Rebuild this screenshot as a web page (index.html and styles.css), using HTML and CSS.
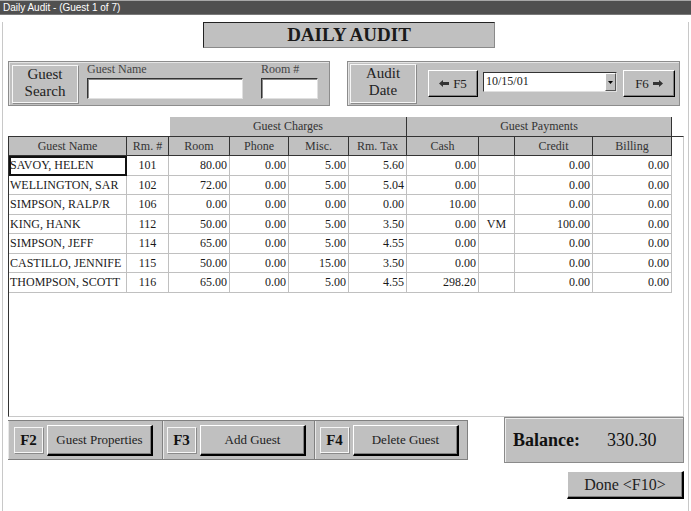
FILE: index.html
```html
<!DOCTYPE html>
<html lang="en">

<head>
    <meta charset="UTF-8">
    <title>Daily Audit</title>
    <link rel="stylesheet" href="styles.css">
</head>

<body>
    <div class="titlebar">Daily Audit - (Guest 1 of 7)</div>

    <div class="window">
        <div class="heading">DAILY AUDIT</div>

        <!-- Search / date panels -->
        <div class="search-row">
            <div class="panel guest-panel">
                <div class="caption-box">Guest<br>Search</div>
                <div class="field name-field">
                    <label>Guest Name</label>
                    <div class="input"></div>
                </div>
                <div class="field room-field">
                    <label>Room #</label>
                    <div class="input"></div>
                </div>
            </div>
            <div class="panel date-panel">
                <div class="caption-box">Audit<br>Date</div>
                <button class="btn nav-btn prev-btn">
                    <svg width="10" height="7" viewBox="0 0 10 7"><path d="M0 3.5 4 0v2h6v3H4v2z" fill="#333"/></svg>
                    F5
                </button>
                <div class="combo">
                    <span class="combo-text">10/15/01</span>
                    <span class="combo-arrow">
                        <svg width="5" height="3" viewBox="0 0 5 3"><path d="M0 0h5L2.5 3z" fill="#000"/></svg>
                    </span>
                </div>
                <button class="btn nav-btn next-btn">
                    F6
                    <svg width="10" height="7" viewBox="0 0 10 7"><path d="M10 3.5 6 0v2H0v3h6v2z" fill="#333"/></svg>
                </button>
            </div>
        </div>

        <!-- Grid -->
        <div class="group-headers">
            <div class="group charges">Guest Charges</div>
            <div class="group payments">Guest Payments</div>
        </div>
        <div class="grid-frame">
            <div class="audit-grid">
                <div class="head">Guest Name</div>
                <div class="head">Rm. #</div>
                <div class="head">Room</div>
                <div class="head">Phone</div>
                <div class="head">Misc.</div>
                <div class="head">Rm. Tax</div>
                <div class="head">Cash</div>
                <div class="head"></div>
                <div class="head">Credit</div>
                <div class="head">Billing</div>

                <div class="cell name focus">SAVOY, HELEN</div>
                <div class="cell rm">101</div>
                <div class="cell">80.00</div>
                <div class="cell">0.00</div>
                <div class="cell">5.00</div>
                <div class="cell">5.60</div>
                <div class="cell">0.00</div>
                <div class="cell card"></div>
                <div class="cell">0.00</div>
                <div class="cell">0.00</div>

                <div class="cell name">WELLINGTON, SAR</div>
                <div class="cell rm">102</div>
                <div class="cell">72.00</div>
                <div class="cell">0.00</div>
                <div class="cell">5.00</div>
                <div class="cell">5.04</div>
                <div class="cell">0.00</div>
                <div class="cell card"></div>
                <div class="cell">0.00</div>
                <div class="cell">0.00</div>

                <div class="cell name">SIMPSON, RALP/R</div>
                <div class="cell rm">106</div>
                <div class="cell">0.00</div>
                <div class="cell">0.00</div>
                <div class="cell">0.00</div>
                <div class="cell">0.00</div>
                <div class="cell">10.00</div>
                <div class="cell card"></div>
                <div class="cell">0.00</div>
                <div class="cell">0.00</div>

                <div class="cell name">KING, HANK</div>
                <div class="cell rm">112</div>
                <div class="cell">50.00</div>
                <div class="cell">0.00</div>
                <div class="cell">5.00</div>
                <div class="cell">3.50</div>
                <div class="cell">0.00</div>
                <div class="cell card">VM</div>
                <div class="cell">100.00</div>
                <div class="cell">0.00</div>

                <div class="cell name">SIMPSON, JEFF</div>
                <div class="cell rm">114</div>
                <div class="cell">65.00</div>
                <div class="cell">0.00</div>
                <div class="cell">5.00</div>
                <div class="cell">4.55</div>
                <div class="cell">0.00</div>
                <div class="cell card"></div>
                <div class="cell">0.00</div>
                <div class="cell">0.00</div>

                <div class="cell name">CASTILLO, JENNIFE</div>
                <div class="cell rm">115</div>
                <div class="cell">50.00</div>
                <div class="cell">0.00</div>
                <div class="cell">15.00</div>
                <div class="cell">3.50</div>
                <div class="cell">0.00</div>
                <div class="cell card"></div>
                <div class="cell">0.00</div>
                <div class="cell">0.00</div>

                <div class="cell name">THOMPSON, SCOTT</div>
                <div class="cell rm">116</div>
                <div class="cell">65.00</div>
                <div class="cell">0.00</div>
                <div class="cell">5.00</div>
                <div class="cell">4.55</div>
                <div class="cell">298.20</div>
                <div class="cell card"></div>
                <div class="cell">0.00</div>
                <div class="cell">0.00</div>
            </div>
        </div>

        <!-- Toolbar and balance -->
        <div class="bottom-row">
            <div class="toolbar">
                <div class="tool-group g1">
                    <span class="fkey">F2</span>
                    <button class="btn tool-btn">Guest Properties</button>
                </div>
                <div class="tool-group g2">
                    <span class="fkey">F3</span>
                    <button class="btn tool-btn">Add Guest</button>
                </div>
                <div class="tool-group g3">
                    <span class="fkey">F4</span>
                    <button class="btn tool-btn">Delete Guest</button>
                </div>
            </div>
            <div class="balance">
                <span class="balance-label">Balance:</span>
                <span class="balance-value">330.30</span>
            </div>
        </div>

        <div class="done-row">
            <button class="btn done-btn">Done &lt;F10&gt;</button>
        </div>
    </div>
</body>

</html>
```

FILE: styles.css
```css
* {
    box-sizing: border-box;
}

body {
    margin: 0;
    width: 691px;
    height: 511px;
    overflow: hidden;
    background: #fff;
    font-family: "Liberation Serif", "Times New Roman", serif;
    color: #222;
}

/* Title bar */
.titlebar {
    height: 15px;
    padding-left: 3px;
    background: #505050;
    border-top: 1px solid #a8a8a8;
    border-bottom: 1px solid #7a7a7a;
    color: #fff;
    font: 10px/13px "Liberation Sans", Arial, sans-serif;
}

/* Window body */
.window {
    margin-left: 2px;
    width: 687px;
    height: 494px;
    border-left: 1px solid #c8c8c8;
    border-right: 1px solid #c8c8c8;
    border-bottom: 2px solid #444;
}

.heading {
    margin: 7px 0 0 200px;
    width: 292px;
    height: 26px;
    background: #c0c0c0;
    border: 1px solid;
    border-color: #222 #8a8a8a #8a8a8a #222;
    text-align: center;
    font-size: 19px;
    font-weight: bold;
    line-height: 24px;
    color: #1a1a1a;
}

/* Search row */
.search-row {
    display: flex;
    margin-top: 13px;
    height: 45px;
}

.panel {
    display: flex;
    align-items: flex-start;
    height: 45px;
    background: #c0c0c0;
    border: 1px solid #8c8c8c;
    box-shadow: inset 1px 1px #e4e4e4;
}

.guest-panel {
    margin-left: 5px;
    width: 322px;
    padding-left: 3px;
}

.date-panel {
    margin-left: 17px;
    width: 333px;
    padding-left: 2px;
}

.caption-box {
    width: 66px;
    padding-top: 0;
    border: 1px solid #f6f6f6;
    box-shadow: 1px 1px #8a8a8a;
    text-align: center;
    font-size: 15px;
    line-height: 17px;
    color: #222;
}

.guest-panel .caption-box {
    height: 38px;
    margin-top: 3px;
}

.date-panel .caption-box {
    height: 39px;
    margin-top: 2px;
}

.field label {
    display: block;
    height: 16px;
    font-size: 12px;
    line-height: 14px;
    color: #444;
}

.name-field {
    margin-left: 9px;
    width: 156px;
}

.room-field {
    margin-left: 18px;
    width: 57px;
}

.input {
    height: 21px;
    background: #fff;
    border: 1px solid;
    border-color: #333 #e0e0e0 #e0e0e0 #333;
    box-shadow: inset 1px 1px #8a8a8a;
}

/* Buttons */
.btn {
    padding: 0;
    background: #c0c0c0;
    border: 1px solid;
    border-color: #fff #000 #000 #fff;
    box-shadow: inset -1px -1px #808080;
    font-family: inherit;
    color: #222;
    cursor: pointer;
}

.nav-btn {
    display: flex;
    align-items: center;
    justify-content: center;
    gap: 4px;
    margin-top: 8px;
    height: 27px;
    font-size: 13px;
}

.prev-btn {
    margin-left: 12px;
    width: 50px;
}

.next-btn {
    margin-left: 6px;
    width: 52px;
}

.combo {
    display: flex;
    justify-content: space-between;
    margin: 10px 0 0 5px;
    width: 134px;
    height: 20px;
    background: #fff;
    border: 1px solid;
    border-color: #333 #e0e0e0 #e0e0e0 #333;
    font-size: 12px;
}

.combo-text {
    padding-left: 2px;
    line-height: 17px;
}

.combo-arrow {
    display: flex;
    align-items: center;
    justify-content: center;
    width: 11px;
    background: #c0c0c0;
    border: 1px solid;
    border-color: #fff #555 #555 #fff;
}

/* Grid */
.group-headers {
    display: flex;
    margin: 11px 0 0 167px;
    height: 19px;
}

.group {
    background: #c0c0c0;
    border-right: 1px solid #333;
    text-align: center;
    font-size: 12px;
    line-height: 19px;
    color: #333;
}

.charges {
    width: 237px;
}

.payments {
    width: 265px;
}

.grid-frame {
    margin-left: 5px;
    width: 676px;
    height: 281px;
    border: 1px solid;
    border-color: #333 #c8c8c8 #c8c8c8 #333;
}

.audit-grid {
    display: grid;
    grid-template-columns: 118px 42px 61px 59px 60px 58px 72px 36px 78px 79px;
    grid-template-rows: 19px repeat(7, 19.57px);
}

.head {
    background: #c0c0c0;
    border-right: 1px solid #333;
    border-bottom: 1px solid #333;
    text-align: center;
    font-size: 12px;
    line-height: 18px;
    color: #333;
}

.cell {
    padding: 0 2px;
    border-right: 1px solid #c0c0c0;
    border-bottom: 1px solid #c0c0c0;
    text-align: right;
    font-size: 12px;
    line-height: 18px;
    white-space: nowrap;
    overflow: hidden;
    color: #1a1a1a;
}

.cell.name {
    padding-left: 1px;
    text-align: left;
}

.cell.rm,
.cell.card {
    text-align: center;
}

.cell.focus {
    outline: 2px solid #111;
    outline-offset: -2px;
}

/* Bottom row */
.bottom-row {
    display: flex;
    align-items: flex-start;
    height: 46px;
}

.toolbar {
    display: flex;
    margin: 3px 0 0 5px;
    height: 40px;
    background: #c0c0c0;
    border-top: 1px solid #808080;
    border-bottom: 1px solid #808080;
}

.tool-group {
    display: flex;
    align-items: center;
    padding-left: 5px;
    border-left: 1px solid #e8e8e8;
    border-right: 1px solid #808080;
}

.g1 {
    width: 155px;
}

.g2 {
    width: 152px;
    padding-left: 3px;
}

.g3 {
    width: 153px;
    padding-left: 4px;
}

.fkey {
    width: 29px;
    height: 26px;
    border: 1px solid #f6f6f6;
    box-shadow: 1px 1px #8a8a8a;
    text-align: center;
    font-size: 15px;
    font-weight: bold;
    line-height: 24px;
    color: #111;
}

.tool-btn {
    margin-left: 4px;
    width: 106px;
    height: 31px;
    border-width: 1px 2px 2px 1px;
    font-size: 13px;
}

.balance {
    display: flex;
    align-items: center;
    margin-left: 36px;
    width: 180px;
    height: 46px;
    padding-left: 8px;
    background: #c0c0c0;
    border: 1px solid #8a8a8a;
    box-shadow: inset 1px 1px #ececec;
    font-size: 18px;
    color: #111;
}

.balance-label {
    font-weight: bold;
}

.balance-value {
    margin-left: 27px;
}

.done-row {
    display: flex;
    justify-content: flex-end;
    margin-top: 8px;
    padding-right: 4px;
}

.done-btn {
    width: 117px;
    height: 28px;
    border-width: 1px 2px 2px 1px;
    font-size: 16px;
}
```
